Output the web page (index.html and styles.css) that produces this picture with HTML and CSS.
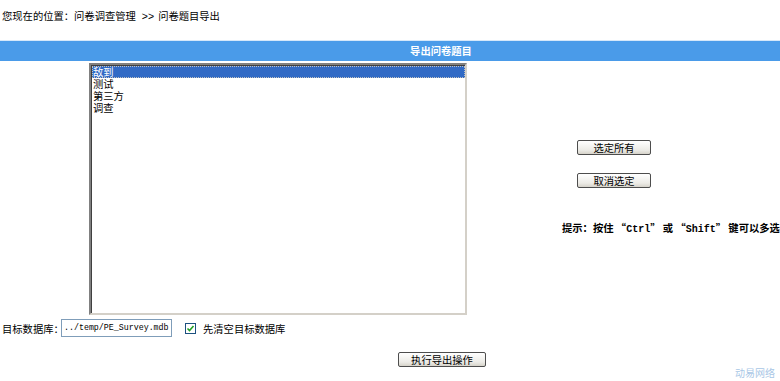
FILE: index.html
```html
<!DOCTYPE html>
<html lang="zh">
<head>
<meta charset="utf-8">
<link rel="stylesheet" href="styles.css">
</head>
<body>
<div class="location"><span>您现在的位置：问卷调查管理</span><span class="sep">&gt;&gt;</span><span>问卷题目导出</span></div>
<div class="titlebar"><span>导出问卷题目</span></div>
<div class="main">
  <div class="listcol">
    <div class="listbox">
      <div class="item selected">敌到</div>
      <div class="item">测试</div>
      <div class="item">第三方</div>
      <div class="item">调查</div>
    </div>
  </div>
  <div class="side">
    <div class="btn btn-first">选定所有</div>
    <div class="btn btn-second">取消选定</div>
    <div class="hint">提示：按住 <span class="q">“</span><span class="mono">Ctrl</span><span class="q">”</span> 或 <span class="q">“</span><span class="mono">Shift</span><span class="q">”</span> 键可以多选</div>
  </div>
</div>
<div class="target">
  <span class="label">目标数据库：</span>
  <span class="input">../temp/PE_Survey.mdb</span>
  <span class="check"><svg width="11" height="11" viewBox="0 0 11 11"><rect x="0.5" y="0.5" width="10" height="10" fill="#fff" stroke="#1c5180"/><path d="M2.5 5.5 L4.5 7.5 L8.5 3" fill="none" stroke="#21a121" stroke-width="1.6"/></svg></span>
  <span class="checklabel">先清空目标数据库</span>
</div>
<div class="exec-row"><div class="btn btn-exec">执行导出操作</div></div>
<div class="watermark">动易网络</div>
</body>
</html>
```

FILE: styles.css
```css
html, body {
  margin: 0;
  padding: 0;
  background: #fff;
  font-family: "Noto Sans CJK SC", "Noto Sans", sans-serif;
  font-size: 10.3px;
  color: #000;
}
body {
  position: relative;
  width: 780px;
  height: 381px;
  overflow: hidden;
}
.location {
  height: 32px;
  line-height: 32px;
  padding-left: 2px;
  white-space: nowrap;
}
.sep {
  font-family: "Liberation Sans", sans-serif;
  font-size: 10.5px;
  margin: 0 4px 0 6px;
}
.titlebar {
  margin-top: 8px;
  height: 20px;
  border-top: 1px solid #d6e8fa;
  background: #4a9be9;
  color: #fff;
  font-weight: bold;
  line-height: 20px;
  text-align: center;
  padding-left: 102px;
}
.main {
  display: flex;
  margin-top: 2px;
}
.listcol {
  padding-left: 89px;
}
.listbox {
  width: 373px;
  height: 247px;
  border: 2px solid;
  border-color: #808080 #d4d0c8 #d4d0c8 #808080;
  box-shadow: inset 1px 1px 0 #404040;
  padding: 1px 0 0 1px;
  background: #fff;
}
.item {
  height: 12px;
  line-height: 12px;
  padding-left: 1px;
  white-space: nowrap;
}
.item.selected {
  background: #316ac5;
  color: #fff;
  outline: 1px dotted #c0c0c0;
  outline-offset: -1px;
}
.side {
  margin-left: 95px;
  display: flex;
  flex-direction: column;
  align-items: flex-start;
}
.btn {
  box-sizing: border-box;
  height: 15px;
  line-height: 13px;
  border: 1px solid #4d4d4d;
  border-radius: 2px;
  background: linear-gradient(#ffffff, #ecebe6 70%, #d6d3ca);
  text-align: center;
}
.btn-first {
  width: 74px;
  margin-left: 15px;
  margin-top: 77px;
}
.btn-second {
  width: 74px;
  margin-left: 15px;
  margin-top: 18px;
}
.hint {
  margin-top: 33px;
  font-weight: bold;
  white-space: nowrap;
  line-height: 14px;
}
.mono {
  font-family: "Liberation Mono", monospace;
  font-weight: bold;
  font-size: 10px;
}
.q {
  font-family: "Noto Sans CJK SC", sans-serif;
}
.target {
  display: flex;
  align-items: center;
  margin-top: 4px;
  height: 18px;
}
.label {
  padding-left: 2px;
  width: 59px;
  white-space: nowrap;
}
.input {
  box-sizing: border-box;
  height: 18px;
  width: 111px;
  border: 1px solid #7f9db9;
  font-family: "Liberation Mono", monospace;
  font-size: 8.3px;
  line-height: 16px;
  padding-left: 2px;
  white-space: nowrap;
  overflow: hidden;
}
.check {
  display: flex;
  margin-left: 13px;
}
.checklabel {
  margin-left: 7px;
}
.exec-row {
  padding-left: 398px;
  margin-top: 15px;
}
.btn-exec {
  width: 88px;
}
.watermark {
  position: absolute;
  left: 735px;
  top: 367px;
  color: #a9c7e6;
  font-size: 10px;
  line-height: 12px;
}
```
